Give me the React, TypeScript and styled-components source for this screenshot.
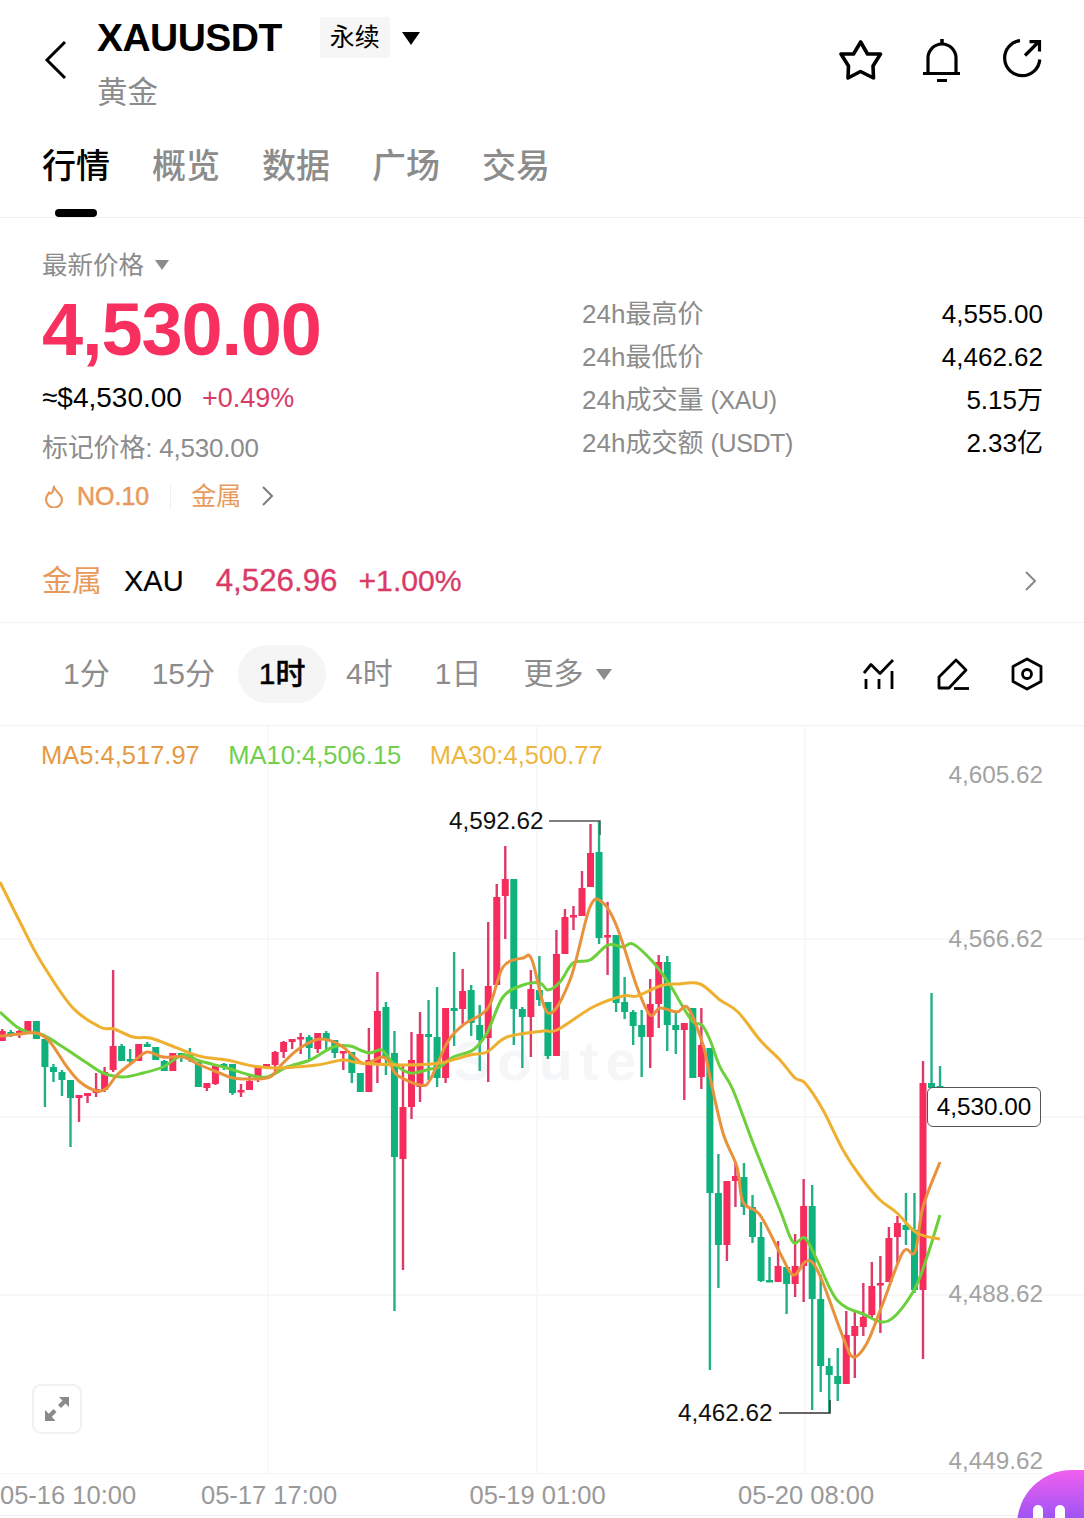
import styled, { createGlobalStyle } from "styled-components";

const GlobalStyle = createGlobalStyle`
  html, body { margin: 0; padding: 0; background: #fff; }
  * { box-sizing: border-box; }
  body { font-family: "Liberation Sans", "Noto Sans CJK SC", sans-serif; color: #000; }
`;

const GRAY = "#8c8c8c";
const RED = "#f8305f";
const DEEP_RED = "#d93a66";
const ORANGE = "#e99a5b";

// [wick top, body top, body bottom, wick bottom, colour] in page pixels
type Candle = [number, number, number, number, "r" | "g"];
const candles: Candle[] = [
  [1029, 1031, 1041, 1041, "r"], [1030, 1032, 1034, 1037, "g"], [1030, 1031, 1034, 1038, "r"], [1021, 1021, 1031, 1031, "r"],
  [1021, 1021, 1039, 1039, "g"], [1039, 1039, 1067, 1107, "g"], [1064, 1067, 1072, 1082, "g"], [1070, 1072, 1080, 1096, "g"],
  [1080, 1080, 1098, 1147, "g"], [1095, 1095, 1098, 1122, "r"], [1093, 1093, 1096, 1103, "r"], [1073, 1089, 1093, 1097, "r"],
  [1067, 1072, 1090, 1092, "r"], [970, 1046, 1070, 1072, "r"], [1044, 1046, 1061, 1061, "g"], [1049, 1059, 1061, 1063, "g"],
  [1044, 1044, 1061, 1061, "r"], [1042, 1044, 1047, 1047, "g"], [1047, 1047, 1060, 1060, "g"], [1060, 1061, 1071, 1071, "g"],
  [1053, 1053, 1071, 1071, "r"], [1053, 1053, 1058, 1062, "g"], [1048, 1055, 1060, 1062, "g"], [1062, 1062, 1087, 1087, "g"],
  [1083, 1083, 1088, 1091, "r"], [1065, 1066, 1084, 1085, "r"], [1063, 1064, 1067, 1070, "g"], [1064, 1064, 1093, 1095, "g"],
  [1084, 1090, 1092, 1097, "r"], [1075, 1081, 1090, 1090, "r"], [1067, 1067, 1080, 1082, "r"], [1064, 1064, 1067, 1067, "r"],
  [1051, 1052, 1065, 1072, "r"], [1041, 1042, 1052, 1058, "r"], [1039, 1039, 1042, 1049, "r"], [1033, 1037, 1039, 1054, "r"],
  [1035, 1037, 1048, 1060, "g"], [1033, 1033, 1049, 1053, "r"], [1031, 1033, 1040, 1049, "g"], [1040, 1040, 1053, 1058, "g"],
  [1051, 1051, 1053, 1070, "r"], [1052, 1052, 1073, 1083, "g"], [1073, 1073, 1092, 1092, "g"], [1028, 1060, 1092, 1092, "r"],
  [972, 1011, 1063, 1083, "r"], [1002, 1007, 1057, 1075, "g"], [1031, 1053, 1157, 1311, "g"], [1065, 1107, 1159, 1270, "r"],
  [1032, 1060, 1107, 1119, "r"], [1012, 1034, 1087, 1102, "r"], [1000, 1034, 1037, 1080, "g"], [987, 1037, 1078, 1087, "g"],
  [1008, 1008, 1078, 1083, "r"], [952, 1008, 1011, 1046, "g"], [969, 991, 1009, 1024, "r"], [985, 990, 1023, 1036, "g"],
  [1005, 1025, 1040, 1071, "g"], [922, 986, 1038, 1082, "r"], [884, 897, 985, 985, "r"], [846, 879, 896, 939, "r"],
  [879, 879, 1009, 1045, "g"], [1007, 1009, 1017, 1068, "g"], [970, 989, 1017, 1057, "r"], [956, 990, 1000, 1006, "g"],
  [1002, 1002, 1056, 1059, "g"], [930, 954, 1056, 1056, "r"], [909, 917, 954, 954, "r"], [906, 915, 917, 930, "r"],
  [871, 888, 916, 916, "r"], [824, 853, 887, 887, "r"], [821, 852, 938, 944, "g"], [902, 935, 937, 975, "r"],
  [935, 935, 1003, 1012, "g"], [977, 1002, 1012, 1019, "g"], [1010, 1012, 1026, 1045, "g"], [1010, 1025, 1037, 1077, "g"],
  [979, 1004, 1037, 1068, "r"], [955, 962, 1004, 1028, "r"], [956, 962, 1025, 1051, "g"], [1012, 1025, 1030, 1054, "g"],
  [1023, 1023, 1030, 1100, "r"], [1008, 1008, 1078, 1078, "g"], [1008, 1045, 1077, 1089, "r"], [1048, 1048, 1193, 1370, "g"],
  [1154, 1193, 1245, 1288, "g"], [1181, 1181, 1245, 1261, "r"], [1163, 1176, 1181, 1207, "r"], [1163, 1177, 1207, 1215, "g"],
  [1195, 1207, 1237, 1243, "g"], [1222, 1237, 1281, 1282, "g"], [1257, 1280, 1282, 1282, "g"], [1241, 1266, 1282, 1282, "r"],
  [1267, 1267, 1284, 1314, "g"], [1234, 1266, 1284, 1297, "r"], [1179, 1206, 1266, 1302, "r"], [1185, 1206, 1299, 1410, "g"],
  [1275, 1299, 1366, 1392, "g"], [1358, 1366, 1375, 1413, "g"], [1348, 1376, 1384, 1401, "g"], [1311, 1335, 1384, 1384, "r"],
  [1312, 1326, 1336, 1378, "r"], [1283, 1317, 1327, 1336, "r"], [1262, 1286, 1315, 1318, "r"], [1256, 1283, 1285, 1333, "r"],
  [1227, 1238, 1282, 1282, "r"], [1216, 1223, 1237, 1263, "r"], [1193, 1225, 1230, 1245, "g"], [1193, 1230, 1290, 1293, "g"],
  [1061, 1083, 1290, 1359, "r"], [993, 1083, 1088, 1088, "g"], [1066, 1086, 1090, 1090, "g"],
];

type Pt = [number, number];
const ma30: Pt[] = [
  [0, 882], [20, 922], [40, 960], [72, 1007], [100, 1027], [114, 1029], [133, 1037], [150, 1038], [167, 1044], [187, 1052],
  [203, 1057], [227, 1060], [253, 1066], [277, 1068], [317, 1065], [343, 1060], [360, 1063], [403, 1065], [440, 1063],
  [470, 1055], [487, 1052], [507, 1037], [543, 1031], [557, 1030], [593, 1007], [623, 996], [637, 996], [660, 986], [677, 984],
  [700, 984], [720, 1000], [738, 1012], [760, 1040], [780, 1060], [795, 1078], [805, 1083], [823, 1110], [843, 1150],
  [863, 1180], [880, 1200], [897, 1213], [917, 1233], [940, 1239],
];
const ma10: Pt[] = [
  [0, 1012], [17, 1027], [28, 1032], [43, 1035], [63, 1047], [87, 1063], [103, 1073], [123, 1077], [143, 1073], [163, 1067],
  [183, 1055], [200, 1061], [227, 1068], [250, 1075], [267, 1077], [287, 1067], [310, 1060], [333, 1047], [350, 1046],
  [360, 1050], [370, 1053], [382, 1050], [393, 1063], [410, 1073], [430, 1069], [440, 1067], [453, 1057], [473, 1050],
  [487, 1033], [503, 997], [523, 985], [540, 983], [548, 990], [560, 982], [573, 963], [590, 960], [608, 945], [623, 947],
  [633, 944], [653, 962], [670, 985], [680, 1002], [693, 1022], [702, 1025], [710, 1040], [720, 1067], [733, 1090],
  [753, 1143], [780, 1210], [793, 1242], [805, 1238], [817, 1260], [837, 1300], [863, 1314], [888, 1321], [913, 1292],
  [927, 1257], [940, 1215],
];
const ma5: Pt[] = [
  [0, 1036], [20, 1034], [37, 1033], [50, 1042], [67, 1067], [80, 1082], [97, 1091], [107, 1088], [117, 1075], [133, 1062],
  [147, 1052], [163, 1057], [183, 1057], [200, 1065], [217, 1072], [233, 1078], [253, 1079], [270, 1077], [283, 1063],
  [300, 1048], [320, 1039], [340, 1045], [360, 1062], [368, 1063], [382, 1057], [390, 1063], [397, 1075], [420, 1085],
  [430, 1080], [447, 1043], [463, 1025], [488, 1008], [503, 967], [523, 958], [532, 960], [548, 1013], [570, 980],
  [590, 907], [603, 903], [617, 927], [637, 987], [650, 1015], [660, 1008], [677, 1012], [688, 1008], [703, 1045],
  [710, 1077], [723, 1133], [737, 1167], [743, 1202], [760, 1215], [780, 1253], [793, 1275], [805, 1262], [813, 1263],
  [823, 1283], [843, 1337], [853, 1357], [867, 1343], [883, 1303], [903, 1252], [915, 1252], [923, 1207], [940, 1162],
];

// catmull-rom through the traced points so the averages don't look kinked
function smooth(pts: Pt[]) {
  let d = `M${pts[0][0]} ${pts[0][1]}`;
  for (let i = 0; i < pts.length - 1; i++) {
    const p0 = pts[i - 1] || pts[i];
    const p1 = pts[i];
    const p2 = pts[i + 1];
    const p3 = pts[i + 2] || p2;
    const c1x = p1[0] + (p2[0] - p0[0]) / 6;
    const c1y = p1[1] + (p2[1] - p0[1]) / 6;
    const c2x = p2[0] - (p3[0] - p1[0]) / 6;
    const c2y = p2[1] - (p3[1] - p1[1]) / 6;
    d += ` C${c1x.toFixed(1)} ${c1y.toFixed(1)} ${c2x.toFixed(1)} ${c2y.toFixed(1)} ${p2[0]} ${p2[1]}`;
  }
  return d;
}

function Chart() {
  return (
    <ChartSvg viewBox="0 726 1084 747">
      {[939, 1117, 1295].map((y) => (
        <line key={y} x1="0" x2="1084" y1={y} y2={y} stroke="#f4f4f4" strokeWidth="1.5" />
      ))}
      {[268, 537, 805].map((x) => (
        <line key={x} x1={x} x2={x} y1="726" y2="1473" stroke="#f5f5f5" strokeWidth="1.2" />
      ))}
      <Watermark x="453" y="1080">Soute</Watermark>
      {candles.map(([wt, bt, bb, wb, c], i) => {
        const x = 2.3 + 8.525 * i;
        return (
          <g key={i}>
            <rect x={x - 1.2} y={wt} width="2.4" height={wb - wt} fill={c === "r" ? "#de3a68" : "#22b088"} />
            <rect x={x - 3.5} y={bt} width="7" height={Math.max(bb - bt, 2.5)} fill={c === "r" ? "#f62d5c" : "#0fb27c"} />
          </g>
        );
      })}
      <MaLine d={smooth(ma10)} stroke="#6ccf3c" />
      <MaLine d={smooth(ma5)} stroke="#e8923c" />
      <MaLine d={smooth(ma30)} stroke="#efb02f" />
      <path d="M549 821H600V835" fill="none" stroke="#555" strokeWidth="1.5" />
      <path d="M779 1413H830V1400" fill="none" stroke="#333" strokeWidth="1.5" />
    </ChartSvg>
  );
}

export default function App() {
  return (
    <Page>
      <GlobalStyle />
      <Header>
        <BackButton viewBox="0 0 24 40">
          <path d="M21 2L3 20l18 18" fill="none" stroke="#000" strokeWidth="3" />
        </BackButton>
        <TitleBlock>
          <TitleRow>
            <Title>XAUUSDT</Title>
            <Badge>永续</Badge>
            <Caret $w={18} $h={13} $color="#000" $ml={12} />
          </TitleRow>
          <Subtitle>黄金</Subtitle>
        </TitleBlock>
        <HeaderIcons>
          <svg width="46" height="44" viewBox="838 38 46 44" fill="none" stroke="#000" strokeWidth="3.6" strokeLinejoin="round">
            <path d="M860.7 42L867.5 54H880.5L873 66L873.5 78L860.5 71.5L848 78L848.5 66L841 54H853.5Z" />
          </svg>
          <svg width="40" height="44" viewBox="921 36 40 44" fill="none" stroke="#000" strokeWidth="3.2">
            <path d="M928 71V56a14 14 0 0 1 28 0V71" />
            <path d="M923 71.5H960M937 78.5H947" />
            <path d="M942 37V42" strokeWidth="3.6" />
          </svg>
          <ShareIcon width="42" height="42" viewBox="1002 40 42 42" fill="none" stroke="#000" strokeWidth="3.2">
            <path d="M1020 42.6A17.6 17.6 0 1 0 1039.8 61.5" />
            <path d="M1025 57.5L1038.5 44M1029.5 43.6H1039.5V53.5" />
          </ShareIcon>
        </HeaderIcons>
      </Header>

      <TabsBar>
        {["行情", "概览", "数据", "广场", "交易"].map((t, i) => (
          <Tab key={t} $active={i === 0}>
            {t}
            {i === 0 && <TabMark />}
          </Tab>
        ))}
      </TabsBar>

      <PriceSection>
        <PriceLeft>
          <PriceLabel>
            最新价格
            <Caret $w={15} $h={10} $color={GRAY} $ml={11} />
          </PriceLabel>
          <BigPrice>4,530.00</BigPrice>
          <FiatRow>
            <span>≈$4,530.00</span>
            <Change>+0.49%</Change>
          </FiatRow>
          <MarkPrice>标记价格: 4,530.00</MarkPrice>
          <RankRow>
            <svg width="20" height="24" viewBox="0 0 20 24" fill="none" stroke={ORANGE} strokeWidth="2.2" strokeLinejoin="round">
              <path d="M10 2.5C10.5 7 18 10 18 15.5a8 8 0 0 1-16 0C2 12.5 4 10.5 5 8.5C6 10.5 9 10 10 2.5Z" />
            </svg>
            <RankNo>NO.10</RankNo>
            <RankSep />
            <span>金属</span>
            <Chevron viewBox="0 0 12 20" $color="#7d7d7d" $ml={20}>
              <path d="M2 1l9 9-9 9" />
            </Chevron>
          </RankRow>
        </PriceLeft>
        <Stats>
          <StatRow><StatName>24h最高价</StatName><StatValue>4,555.00</StatValue></StatRow>
          <StatRow><StatName>24h最低价</StatName><StatValue>4,462.62</StatValue></StatRow>
          <StatRow><StatName>24h成交量 <StatUnit>(XAU)</StatUnit></StatName><StatValue>5.15万</StatValue></StatRow>
          <StatRow><StatName>24h成交额 <StatUnit>(USDT)</StatUnit></StatName><StatValue>2.33亿</StatValue></StatRow>
        </Stats>
      </PriceSection>

      <MetalRow>
        <MetalName>金属</MetalName>
        <MetalCode>XAU</MetalCode>
        <MetalPrice>4,526.96</MetalPrice>
        <MetalChange>+1.00%</MetalChange>
        <Chevron viewBox="0 0 12 20" $color="#8a8a8a" $ml="auto">
          <path d="M2 1l9 9-9 9" />
        </Chevron>
      </MetalRow>

      <TimeBar>
        {["1分", "15分", "1时", "4时", "1日"].map((t) => (
          <TimeItem key={t} $active={t === "1时"}>{t}</TimeItem>
        ))}
        <TimeItem>
          更多
          <Caret $w={16} $h={11} $color={GRAY} $ml={13} />
        </TimeItem>
        <TimeTools>
          <svg width="32" height="32" viewBox="0 0 32 32" fill="none" stroke="#000" strokeWidth="2.8">
            <path d="M1 15L8 6.5L17 15.5L30 2" strokeLinejoin="round" />
            <path d="M3 21V31M16 21V31M29 13V31" />
          </svg>
          <svg width="32" height="32" viewBox="0 0 32 32" fill="none" stroke="#000" strokeWidth="2.8" strokeLinejoin="round">
            <path d="M2 30V19L19 2L29 12L12 30Z" />
            <path d="M17 30.5H32" />
          </svg>
          <svg width="32" height="34" viewBox="0 0 32 34" fill="none" stroke="#000" strokeWidth="2.8">
            <path d="M16 2L30 9.500V24.500L16 32L2 24.500V9.500Z" strokeLinejoin="round" />
            <circle cx="16" cy="17" r="4.500" />
          </svg>
        </TimeTools>
      </TimeBar>

      <ChartArea>
        <Chart />
        <Legend>
          <LegendItem $color="#e49a45">MA5:4,517.97</LegendItem>
          <LegendItem $color="#70cf4c">MA10:4,506.15</LegendItem>
          <LegendItem $color="#eeb63e">MA30:4,500.77</LegendItem>
        </Legend>
        <AxisPrice $y={49}>4,605.62</AxisPrice>
        <AxisPrice $y={213}>4,566.62</AxisPrice>
        <AxisPrice $y={568}>4,488.62</AxisPrice>
        <AxisPrice $y={735}>4,449.62</AxisPrice>
        <Extreme $x={449} $y={95}>4,592.62</Extreme>
        <Extreme $x={678} $y={687}>4,462.62</Extreme>
        <PriceTag>4,530.00</PriceTag>
        <ExpandButton>
          <svg width="26" height="26" viewBox="0 0 26 26" fill="#8a8a8a">
            <path d="M15 1H25V11L21.500 7.500L17 12L14 9L18.500 4.500Z" />
            <path d="M1 25V14L4.800 17.800L9.500 13L12.500 16L7.800 20.800L11.500 25Z" />
          </svg>
        </ExpandButton>
      </ChartArea>

      <TimeAxis>
        <span>05-16 10:00</span>
        <span>05-17 17:00</span>
        <span>05-19 01:00</span>
        <span>05-20 08:00</span>
      </TimeAxis>

      <Assistant>
        <AssistantEye />
        <AssistantEye />
      </Assistant>
    </Page>
  );
}

const Page = styled.div`
  position: relative;
  width: 1084px;
  height: 1518px;
  overflow: hidden;
  background: #fff;
`;

const Header = styled.header`
  display: flex;
  height: 128px;
  padding: 14px 40px 0 44px;
`;

const BackButton = styled.svg`
  width: 24px;
  height: 40px;
  margin-top: 26px;
`;

const TitleBlock = styled.div`
  margin-left: 29px;
`;

const TitleRow = styled.div`
  display: flex;
  align-items: center;
  height: 48px;
`;

const Title = styled.h1`
  margin: 0;
  font-size: 39px;
  line-height: 48px;
  font-weight: 700;
  letter-spacing: -0.55px;
`;

const Badge = styled.span`
  width: 70px;
  height: 41px;
  margin-left: 38px;
  margin-top: -1px;
  background: #f6f6f6;
  border-radius: 3px;
  font-size: 25px;
  line-height: 40px;
  text-align: center;
`;

const Caret = styled.i<{ $w: number; $h: number; $color: string; $ml: number }>`
  display: inline-block;
  flex: none;
  width: 0;
  height: 0;
  margin-left: ${(p) => p.$ml}px;
  border-left: ${(p) => p.$w / 2}px solid transparent;
  border-right: ${(p) => p.$w / 2}px solid transparent;
  border-top: ${(p) => p.$h}px solid ${(p) => p.$color};
`;

const Subtitle = styled.div`
  margin-top: 10px;
  font-size: 30.5px;
  line-height: 40px;
  color: ${GRAY};
`;

const HeaderIcons = styled.div`
  display: flex;
  gap: 37px;
  margin-left: auto;
  padding-top: 24px;
  align-items: flex-start;
`;

const ShareIcon = styled.svg`
  margin-left: 4px;
`;

const TabsBar = styled.nav`
  display: flex;
  gap: 42px;
  height: 90px;
  padding: 18px 0 0 42px;
  border-bottom: 1.5px solid #f0f0f0;
`;

const Tab = styled.div<{ $active: boolean }>`
  display: flex;
  flex-direction: column;
  align-items: center;
  gap: 23px;
  font-size: 34px;
  line-height: 40px;
  font-weight: 500;
  color: ${(p) => (p.$active ? "#000" : GRAY)};
`;

const TabMark = styled.span`
  width: 42px;
  height: 8px;
  border-radius: 4px;
  background: #000;
`;

const PriceSection = styled.section`
  display: flex;
  justify-content: space-between;
  height: 322px;
  padding: 0 41px 0 42px;
`;

const PriceLeft = styled.div`
  padding-top: 29px;
`;

const PriceLabel = styled.div`
  display: flex;
  align-items: center;
  font-size: 25.5px;
  line-height: 36px;
  color: ${GRAY};
`;

const BigPrice = styled.div`
  margin-top: 7px;
  font-size: 74px;
  line-height: 80px;
  font-weight: 700;
  letter-spacing: -1.15px;
  color: ${RED};
`;

const FiatRow = styled.div`
  display: flex;
  gap: 20px;
  margin-top: 10px;
  font-size: 28px;
  line-height: 36px;
`;

const Change = styled.span`
  color: ${DEEP_RED};
  font-size: 27px;
`;

const MarkPrice = styled.div`
  margin-top: 14px;
  font-size: 26px;
  line-height: 36px;
  letter-spacing: -0.2px;
  color: ${GRAY};
`;

const RankRow = styled.div`
  display: flex;
  align-items: center;
  margin-top: 12px;
  height: 36px;
  padding-left: 2px;
  font-size: 25px;
  line-height: 34px;
  color: ${ORANGE};
`;

const RankNo = styled.span`
  margin-left: 13px;
  font-size: 25px;
  -webkit-text-stroke: 0.5px ${ORANGE};
`;

const RankSep = styled.span`
  width: 1px;
  height: 25px;
  margin: 0 20px 0 21px;
  background: #f0f0f0;
`;

const Chevron = styled.svg<{ $color: string; $ml: number | string }>`
  flex: none;
  width: 12px;
  height: 20px;
  margin-left: ${(p) => (typeof p.$ml === "number" ? `${p.$ml}px` : p.$ml)};
  fill: none;
  stroke: ${(p) => p.$color};
  stroke-width: 2;
`;

const Stats = styled.div`
  width: 461px;
  padding-top: 75px;
`;

const StatRow = styled.div`
  display: flex;
  justify-content: space-between;
  height: 43px;
  font-size: 26px;
  line-height: 43px;
`;

const StatName = styled.span`
  color: ${GRAY};
`;

const StatUnit = styled.span`
  font-size: 25px;
  letter-spacing: -0.4px;
`;

const StatValue = styled.span`
  color: #000;
`;

const MetalRow = styled.section`
  display: flex;
  align-items: center;
  height: 83px;
  padding: 0 48px 0 42px;
  border-bottom: 1.5px solid #f2f2f2;
  line-height: 40px;
`;

const MetalName = styled.span`
  font-size: 30px;
  color: ${ORANGE};
`;

const MetalCode = styled.span`
  margin-left: 22px;
  font-size: 29px;
  -webkit-text-stroke: 0.2px #000;
`;

const MetalPrice = styled.span`
  margin-left: 32px;
  font-size: 31.300px;
  color: ${DEEP_RED};
  -webkit-text-stroke: 0.3px ${DEEP_RED};
`;

const MetalChange = styled.span`
  margin-left: 21px;
  font-size: 30.200px;
  color: ${DEEP_RED};
  -webkit-text-stroke: 0.3px ${DEEP_RED};
`;

const TimeBar = styled.section`
  display: flex;
  align-items: center;
  height: 103px;
  padding: 0 41px 0 42px;
  border-bottom: 1.5px solid #f2f2f2;
`;

const TimeItem = styled.div<{ $active?: boolean }>`
  display: flex;
  align-items: center;
  justify-content: center;
  height: 58px;
  padding: 0 21px;
  border-radius: 29px;
  font-size: 30px;
  line-height: 58px;
  white-space: nowrap;
  font-weight: ${(p) => (p.$active ? 500 : 400)};
  color: ${(p) => (p.$active ? "#000" : GRAY)};
  background: ${(p) => (p.$active ? "#f5f5f5" : "transparent")};
  ${(p) => p.$active && "width: 88px; padding: 0; margin: 0 -1px 0 2px; -webkit-text-stroke: 0.4px #000;"}
`;

const TimeTools = styled.div`
  display: flex;
  align-items: center;
  gap: 42px;
  margin-left: auto;
`;

const ChartArea = styled.section`
  position: relative;
  height: 747px;
`;

const ChartSvg = styled.svg`
  display: block;
  width: 1084px;
  height: 747px;
`;

const Watermark = styled.text`
  font-size: 56px;
  font-weight: 700;
  letter-spacing: 7px;
  fill: #f4f6f8;
`;

const MaLine = styled.path`
  fill: none;
  stroke-width: 3;
  stroke-linejoin: round;
`;

const Legend = styled.div`
  position: absolute;
  top: 12px;
  left: 41px;
  display: flex;
  gap: 28.500px;
`;

const LegendItem = styled.span<{ $color: string }>`
  font-size: 25.5px;
  line-height: 34px;
  color: ${(p) => p.$color};
`;

const AxisPrice = styled.span<{ $y: number }>`
  position: absolute;
  top: ${(p) => p.$y - 17}px;
  right: 41px;
  font-size: 24.300px;
  line-height: 34px;
  color: #a3a3a3;
`;

const Extreme = styled.span<{ $x: number; $y: number }>`
  position: absolute;
  left: ${(p) => p.$x}px;
  top: ${(p) => p.$y - 17}px;
  font-size: 24.300px;
  line-height: 34px;
  color: #111;
`;

const PriceTag = styled.div`
  position: absolute;
  top: 361px;
  left: 927px;
  display: flex;
  align-items: center;
  justify-content: center;
  width: 114px;
  height: 40px;
  background: #fff;
  border: 1.5px solid #555;
  border-radius: 6px;
  font-size: 24.300px;
  color: #000;
`;

const ExpandButton = styled.div`
  position: absolute;
  left: 32px;
  top: 658px;
  display: flex;
  align-items: center;
  justify-content: center;
  width: 50px;
  height: 50px;
  background: #fff;
  border: 2px solid #f1f1f1;
  border-radius: 9px;
`;

const TimeAxis = styled.footer`
  display: flex;
  gap: 132.500px;
  height: 43px;
  align-items: center;
  padding-top: 2px;
  border-top: 1.5px solid #f6f6f6;
  border-bottom: 1.5px solid #f0f0f0;
  font-size: 25.5px;
  color: #999;
  white-space: nowrap;
  span {
    width: 136px;
    flex: none;
  }
  span:first-child {
    margin-right: -67.500px;
  }
`;

const Assistant = styled.div`
  position: absolute;
  left: 1017px;
  top: 1470px;
  display: flex;
  gap: 12px;
  width: 80px;
  height: 60px;
  padding: 35px 0 0 16px;
  border-radius: 55px 0 0 0;
  background: linear-gradient(180deg, #f25ff0, #8a52f6);
`;

const AssistantEye = styled.span`
  width: 10px;
  height: 24px;
  border-radius: 5px;
  background: #fff;
`;
